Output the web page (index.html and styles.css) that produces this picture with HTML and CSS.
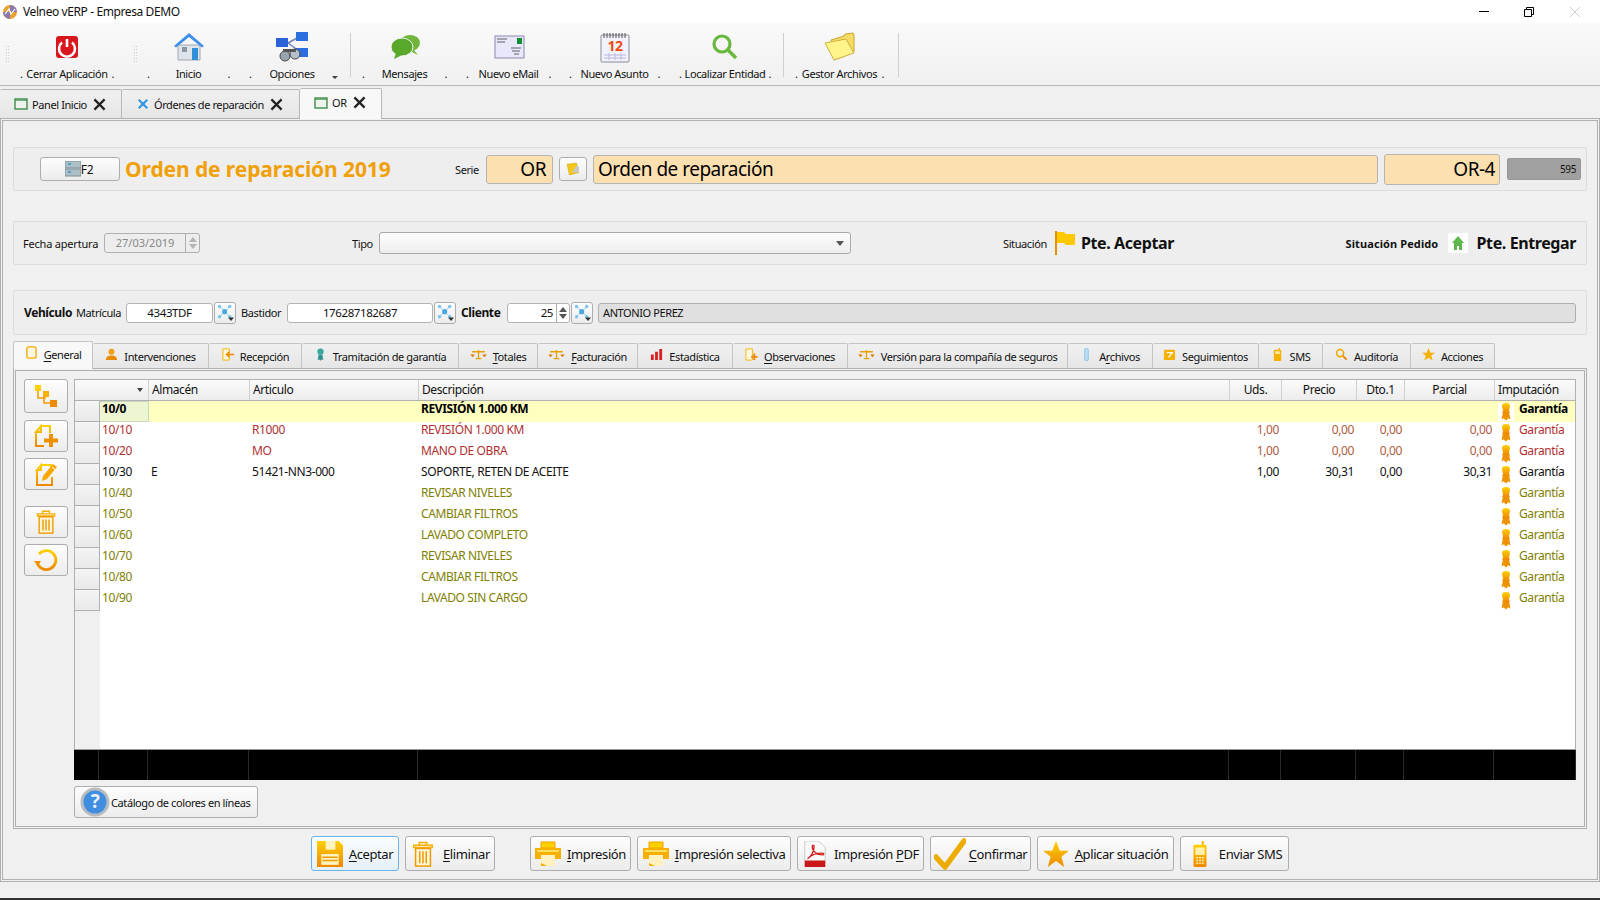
FILE: index.html
```html
<!DOCTYPE html>
<html lang="es">

<head>
    <meta charset="UTF-8">
    <title>Velneo vERP - Empresa DEMO</title>
    <link rel="stylesheet" href="styles.css">
</head>

<body>
    <svg class="sprite" xmlns="http://www.w3.org/2000/svg">
        <defs>
            <linearGradient id="og" x1="0" y1="0" x2="0" y2="1">
                <stop offset="0" stop-color="#ffd000" />
                <stop offset="1" stop-color="#ee8800" />
            </linearGradient>
            <symbol id="i-window" viewBox="0 0 14 12">
                <rect x="1" y="1" width="12" height="10" fill="#eef3ee" stroke="#3d8f4a" stroke-width="1.4" />
                <path d="M1 2.2h12" stroke="#3d8f4a" stroke-width="1" />
            </symbol>
            <symbol id="i-close" viewBox="0 0 14 14">
                <path d="M1.500 1.500L12.500 12.500M12.500 1.500L1.500 12.500" stroke="#222" stroke-width="2.400" />
            </symbol>
            <symbol id="i-nodes" viewBox="0 0 20 20">
                <path d="M9 9L3 3M9 9L15 3M9 9L3 15M9 9L15 15" stroke="#a8d8f0" stroke-width="1.200" />
                <circle cx="9" cy="9" r="3" fill="#4aa8e0" />
                <circle cx="3" cy="3" r="2" fill="#7cc4ec" />
                <circle cx="15" cy="3" r="2" fill="#7cc4ec" />
                <circle cx="3" cy="15" r="2" fill="#7cc4ec" />
                <circle cx="15" cy="15" r="2" fill="#7cc4ec" />
                <path d="M13 16h7l-3.500 4z" fill="#333" />
            </symbol>
            <symbol id="i-medal" viewBox="0 0 12 18">
                <path d="M3 9L1.500 16.500l2.200-1.200L6 17.500l2.300-2.200 2.200 1.200L9 9z" fill="#ee9200" />
                <path d="M2 3a4 3 0 0 1 8 0c0 2-1 3-1 5l1 2H2l1-2c0-2-1-3-1-5z" fill="url(#og)" />
            </symbol>
            <symbol id="i-scale" viewBox="0 0 18 12">
                <path d="M2 3h14M9 1v9M6 10.500h6" stroke="#e8a000" stroke-width="1.400" />
                <path d="M0 6h5l-2.500 3zM13 6h5l-2.500 3z" fill="#e07800" />
            </symbol>
            <symbol id="i-trash" viewBox="0 0 22 28">
                <path d="M7 4V1.500h8V4M1 4.500h20v2.500H1z" fill="none" stroke="#f5b000" stroke-width="1.6" />
                <rect x="3" y="8" width="16" height="19" fill="#fff6d8" stroke="#ee9a00" stroke-width="1.6" />
                <path d="M7.500 11v13M11 11v13M14.500 11v13" stroke="#ee9a00" stroke-width="1.6" />
            </symbol>
            <symbol id="i-printer" viewBox="0 0 26 26">
                <path d="M6 1h14v6H6z" fill="#ffd000" stroke="#f0a000" />
                <path d="M0 7h26v11h-6v7H6v-7H0z" fill="#f7b000" />
                <path d="M6 14h14v11h-8l-6-3z" fill="#fff2c0" />
                <path d="M2 9h22v2H2z" fill="#ffe060" />
            </symbol>
        </defs>
    </svg>

    <div class="titlebar">
        <svg class="app-logo" viewBox="0 0 14 14">
            <circle cx="7" cy="7" r="7" fill="#e8a030" />
            <path d="M7 0a7 7 0 0 1 7 7L7 7z" fill="#8a78b0" />
            <path d="M0 7a7 7 0 0 0 7 7L7 7z" fill="#8a78b0" />
            <path d="M2 9L6 4l2 5 4-5" fill="none" stroke="#fff" stroke-width="1.2" />
        </svg>
        <span class="app-title">Velneo vERP - Empresa DEMO</span>
        <svg class="win-btn win-min" viewBox="0 0 10 10"><path d="M0 4.500h10" stroke="#000" /></svg>
        <svg class="win-btn win-restore" viewBox="0 0 10 10">
            <path d="M.5 2.500h7v7h-7zM2.500 2.500v-2h7v7h-2" fill="none" stroke="#000" />
        </svg>
        <svg class="win-btn win-close" viewBox="0 0 10 10"><path d="M0 0l10 10M10 0L0 10" stroke="#ccc" /></svg>
    </div>

    <div class="toolbar">
        <div class="grip grip-1"></div>
        <div class="tool tool-cerrar">
            <svg class="tool-icon" width="32" height="32" viewBox="0 0 32 32">
                <rect x="5" y="5" width="22" height="22" rx="3" fill="#d9161e" />
                <path d="M11 11.500a8 8 0 1 0 10 0" fill="none" stroke="#fff" stroke-width="2.600" />
                <path d="M16 8v8" stroke="#fff" stroke-width="2.600" />
            </svg>
            <div class="tool-label"><span>.</span><span>Cerrar Aplicación</span><span>.</span></div>
        </div>
        <div class="grip grip-2"></div>
        <div class="tool tool-inicio">
            <svg class="tool-icon" width="32" height="32" viewBox="0 0 32 32">
                <path d="M5 14h22v15H5z" fill="#dfe4ea" stroke="#a0a8b0" />
                <path d="M1 15L16 2l15 13-2 1.500L16 6 3 16.500z" fill="#3f8fe8" />
                <rect x="9" y="16" width="5" height="5" fill="#8c97a3" />
                <rect x="19" y="17" width="6" height="12" fill="#2f8fd8" />
            </svg>
            <div class="tool-label"><span>.</span><span>Inicio</span><span>.</span></div>
        </div>
        <div class="tool tool-opciones">
            <svg class="tool-icon" width="34" height="32" viewBox="0 0 34 32">
                <path d="M13 12L24 6M13 12l11 8" stroke="#7080c0" stroke-width="1.500" fill="none" />
                <rect x="1" y="7" width="12" height="9" fill="#2a62d8" />
                <rect x="21" y="1" width="12" height="9" fill="#2a6ee0" />
                <rect x="21" y="17" width="12" height="9" fill="#2a6ee0" />
                <circle cx="10" cy="25" r="5" fill="#9aa4ae" stroke="#444" />
                <circle cx="20" cy="23" r="5" fill="#b4c0cc" stroke="#444" />
                <path d="M8 18h13v3H8z" fill="#555" />
            </svg>
            <div class="tool-label"><span>.</span><span>Opciones</span><span>.</span></div>
        </div>
        <div class="more-arrow"></div>
        <div class="tool-sep sep-1"></div>
        <div class="tool tool-mensajes">
            <svg class="tool-icon" width="32" height="32" viewBox="0 0 32 32">
                <ellipse cx="21" cy="12" rx="10" ry="8" fill="#6fb63a" />
                <path d="M24 18l5 6-8-4z" fill="#6fb63a" />
                <ellipse cx="13" cy="16" rx="11" ry="9" fill="#58a82c" stroke="#f4f4f4" />
                <path d="M7 22l-2 6 8-4z" fill="#58a82c" />
            </svg>
            <div class="tool-label"><span>.</span><span>Mensajes</span><span>.</span></div>
        </div>
        <div class="tool tool-email">
            <svg class="tool-icon" width="32" height="32" viewBox="0 0 32 32">
                <rect x="2" y="5" width="29" height="22" fill="#e8e8fa" stroke="#8888b0" />
                <rect x="24" y="7" width="5" height="6" fill="#0f9030" />
                <path d="M4 8h10M4 11h8M18 17h10M19 20h8M21 23h5" stroke="#8c8c98" stroke-width="1.500" />
            </svg>
            <div class="tool-label"><span>.</span><span>Nuevo eMail</span><span>.</span></div>
        </div>
        <div class="tool tool-asunto">
            <svg class="tool-icon" width="32" height="32" viewBox="0 0 32 32">
                <rect x="2" y="4" width="28" height="27" rx="1" fill="#f2f2fa" stroke="#8a8a98" />
                <path d="M5 2v5M8 2v5M11 2v5M14 2v5M17 2v5M20 2v5M23 2v5M26 2v5" stroke="#555" />
                <text class="cal-num" x="16" y="20">12</text>
                <path d="M5 24h22M5 27h22M10 22v7M16 22v7M22 22v7" stroke="#b8b8e0" />
            </svg>
            <div class="tool-label"><span>.</span><span>Nuevo Asunto</span><span>.</span></div>
        </div>
        <div class="tool tool-localizar">
            <svg class="tool-icon" width="32" height="32" viewBox="0 0 32 32">
                <circle cx="13" cy="13" r="8" fill="none" stroke="#68b83e" stroke-width="3.200" />
                <path d="M19 19l8 8" stroke="#68b83e" stroke-width="3.600" />
            </svg>
            <div class="tool-label"><span>.</span><span>Localizar Entidad</span><span>.</span></div>
        </div>
        <div class="tool-sep sep-2"></div>
        <div class="tool tool-gestor">
            <svg class="tool-icon" width="32" height="32" viewBox="0 0 32 32">
                <path d="M7 9l13-4 1-2 8-1 1 2v17L10 29z" fill="#f6dc60" stroke="#c8a838" />
                <path d="M1 12l21-4 8 14-20 7z" fill="#fff48a" stroke="#d0b040" />
            </svg>
            <div class="tool-label"><span>.</span><span>Gestor Archivos</span><span>.</span></div>
        </div>
        <div class="tool-sep sep-3"></div>
    </div>

    <div class="doc-tabs">
        <div class="doc-tab">
            <svg class="doc-tab-icon"><use href="#i-window" /></svg>
            <span>Panel Inicio</span>
            <svg class="doc-tab-close"><use href="#i-close" /></svg>
        </div>
        <div class="doc-tab">
            <svg class="doc-tab-icon" viewBox="0 0 14 14">
                <path d="M2 2l10 10M12 2L2 12" stroke="#2f9ae0" stroke-width="2.400" />
                <circle cx="7" cy="7" r="2.400" fill="#2f9ae0" />
            </svg>
            <span>Órdenes de reparación</span>
            <svg class="doc-tab-close"><use href="#i-close" /></svg>
        </div>
        <div class="doc-tab active">
            <svg class="doc-tab-icon"><use href="#i-window" /></svg>
            <span>OR</span>
            <svg class="doc-tab-close"><use href="#i-close" /></svg>
        </div>
    </div>

    <div class="main-pane">
        <div class="group group-head">
            <button class="btn btn-f2">
                <svg class="f2-icon" viewBox="0 0 16 16">
                    <rect x="0" y="0" width="16" height="7" fill="#aebfc6" stroke="#7d8f96" />
                    <rect x="0" y="8" width="16" height="7" fill="#aebfc6" stroke="#7d8f96" />
                    <path d="M3 3h3M3 11h3" stroke="#4fa0d0" stroke-width="2" />
                </svg><span>F2</span>
            </button>
            <div class="page-title">Orden de reparación 2019</div>
            <span class="lbl lbl-serie">Serie</span>
            <div class="field-big fb-serie">OR</div>
            <button class="btn btn-folder">
                <svg class="folder-mini" viewBox="0 0 12 12">
                    <path d="M1 2l8-1 2 8-8 2z" fill="#f4c814" stroke="#d8a800" stroke-width=".6" />
                    <path d="M9 3l2 1v5H5z" fill="#c8c8c8" />
                </svg>
            </button>
            <div class="field-big fb-desc">Orden de reparación</div>
            <div class="field-big fb-num">OR-4</div>
            <div class="field-gray">595</div>
        </div>

        <div class="group group-dates">
            <span class="lbl lbl-fecha">Fecha apertura</span>
            <div class="date-field">
                <span class="date-val">27/03/2019</span>
                <div class="spin spin-off"><i class="up"></i><i class="down"></i></div>
            </div>
            <span class="lbl lbl-tipo">Tipo</span>
            <div class="combo"><i class="combo-arrow"></i></div>
            <span class="lbl lbl-sit">Situación</span>
            <svg class="flag" viewBox="0 0 20 24">
                <path d="M1 0v24" stroke="#e89000" stroke-width="2" />
                <path d="M2 1h7l2 2h9v11h-9l-2-2H2z" fill="#ffc800" />
            </svg>
            <span class="state">Pte. Aceptar</span>
            <span class="lbl lbl-sitped">Situación Pedido</span>
            <span class="home-box">
                <svg class="home-icon" viewBox="0 0 14 16">
                    <path d="M7 1l6 7h-2v7H8v-4H6v4H3V8H1z" fill="#5cb84c" />
                </svg>
            </span>
            <span class="state state-ped">Pte. Entregar</span>
        </div>

        <div class="group group-vehicle">
            <span class="lbl-bold lbl-veh">Vehículo</span>
            <span class="lbl lbl-mat">Matrícula</span>
            <div class="input in-mat">4343TDF</div>
            <button class="btn btn-pick"><svg class="pick-icon"><use href="#i-nodes" /></svg></button>
            <span class="lbl lbl-bas">Bastidor</span>
            <div class="input in-bas">176287182687</div>
            <button class="btn btn-pick"><svg class="pick-icon"><use href="#i-nodes" /></svg></button>
            <span class="lbl-bold lbl-cli">Cliente</span>
            <div class="input in-cli">
                <span class="cli-val">25</span>
                <div class="spin"><i class="up"></i><i class="down"></i></div>
            </div>
            <button class="btn btn-pick"><svg class="pick-icon"><use href="#i-nodes" /></svg></button>
            <div class="input-name">ANTONIO PEREZ</div>
        </div>

        <div class="sub-tabs">
            <div class="sub-tab active">
                <svg class="st-icon" viewBox="0 0 14 14"><rect x="2" y="1" width="10" height="12" rx="2" fill="#fff8e0" stroke="#f5a800" stroke-width="1.400" /></svg>
                <span><u>G</u>eneral</span>
            </div>
            <div class="sub-tab">
                <svg class="st-icon" viewBox="0 0 14 14"><circle cx="7" cy="4" r="3.200" fill="#f0a010" /><path d="M1 13c0-4 3-5 6-5s6 1 6 5z" fill="#e88a00" /></svg>
                <span>Intervenciones</span>
            </div>
            <div class="sub-tab">
                <svg class="st-icon" viewBox="0 0 14 14"><path d="M2 1h7v12H2z" fill="#fff8e0" stroke="#f5b000" /><path d="M14 7H7M9 4L6 7l3 3" stroke="#ee8800" stroke-width="1.600" fill="none" /></svg>
                <span>Recepción</span>
            </div>
            <div class="sub-tab">
                <svg class="st-icon" viewBox="0 0 12 18"><path d="M3.500 9L2 17l2-1.400L6 17.500l2-1.900L10 17 8.500 9z" fill="#2a9090" /><circle cx="6" cy="5" r="4.400" fill="#3aa8a0" /></svg>
                <span>Tramitación de garantía</span>
            </div>
            <div class="sub-tab">
                <svg class="st-icon st-wide"><use href="#i-scale" /></svg>
                <span><u>T</u>otales</span>
            </div>
            <div class="sub-tab">
                <svg class="st-icon st-wide"><use href="#i-scale" /></svg>
                <span><u>F</u>acturación</span>
            </div>
            <div class="sub-tab">
                <svg class="st-icon" viewBox="0 0 14 14"><path d="M1 7h3v6H1zM5.500 4h3v9h-3zM10 1h3v12h-3z" fill="#d82020" /></svg>
                <span>Estadística</span>
            </div>
            <div class="sub-tab">
                <svg class="st-icon" viewBox="0 0 14 14"><path d="M1 1h7v12H1z" fill="#fff8e0" stroke="#f5b000" /><path d="M10 6v7M6.500 9.500h7" stroke="#ee8800" stroke-width="2" /></svg>
                <span><u>O</u>bservaciones</span>
            </div>
            <div class="sub-tab">
                <svg class="st-icon st-wide"><use href="#i-scale" /></svg>
                <span>Versión para la compañía de seguros</span>
            </div>
            <div class="sub-tab">
                <svg class="st-icon" viewBox="0 0 14 14"><rect x="5" y="0" width="4" height="14" rx="2" fill="#b8ddf4" stroke="#6ab0e0" stroke-width=".6" /></svg>
                <span>A<u>r</u>chivos</span>
            </div>
            <div class="sub-tab">
                <svg class="st-icon" viewBox="0 0 14 14"><rect x="1" y="2" width="12" height="11" rx="1" fill="#f5b000" /><path d="M4 5h6L6 10" stroke="#fff" stroke-width="1.400" fill="none" /></svg>
                <span>Seguimientos</span>
            </div>
            <div class="sub-tab">
                <svg class="st-icon" viewBox="0 0 14 14"><rect x="3" y="2" width="8" height="12" rx="1" fill="#f5b000" /><rect x="4.500" y="3.500" width="5" height="3" fill="#ffe9a0" /><path d="M9 0v3" stroke="#f5b000" stroke-width="1.400" /></svg>
                <span>SMS</span>
            </div>
            <div class="sub-tab">
                <svg class="st-icon" viewBox="0 0 14 14"><circle cx="5.500" cy="5.500" r="3.800" fill="none" stroke="#f0a800" stroke-width="1.600" /><path d="M8.500 8.500l4 4" stroke="#ee8800" stroke-width="2" /></svg>
                <span>Auditoría</span>
            </div>
            <div class="sub-tab">
                <svg class="st-icon" viewBox="0 0 14 14"><path d="M7 0l2 5h5l-4 3 1.500 5.500L7 10.500 2.500 13.500 4 8 0 5h5z" fill="#f5b000" /></svg>
                <span>Acciones</span>
            </div>
        </div>

        <div class="sub-pane">
            <div class="grid-area">
                <div class="side-bar">
                    <button class="btn side-btn side-first">
                        <svg class="side-icon" viewBox="0 0 24 24">
                            <path d="M4 6v8h8M10 9v10h8" stroke="#f0a000" stroke-width="1.600" fill="none" />
                            <rect x="1" y="1" width="6" height="6" fill="#ffd000" />
                            <rect x="9" y="7" width="6" height="6" fill="#f5b000" />
                            <rect x="16" y="16" width="7" height="7" fill="#ee8a00" />
                        </svg>
                    </button>
                    <button class="btn side-btn">
                        <svg class="side-icon" viewBox="0 0 24 24">
                            <path d="M7 2h9v7M2 8v14h8M7 2L2 8h5z" fill="none" stroke="url(#og)" stroke-width="2" />
                            <path d="M17 10v13M10 16.500h14" stroke="#ee9000" stroke-width="4" />
                        </svg>
                    </button>
                    <button class="btn side-btn">
                        <svg class="side-icon" viewBox="0 0 24 24">
                            <path d="M7 3h10v3M3 8v15h15v-8M7 3L3 8h4z" fill="none" stroke="url(#og)" stroke-width="2" />
                            <path d="M19 2l4 3-10 12-5 2 1-5z" fill="#f5a800" />
                            <path d="M18 5l3 2.500" stroke="#fff" />
                        </svg>
                    </button>
                    <button class="btn side-btn side-sep"><svg class="side-icon"><use href="#i-trash" /></svg></button>
                    <button class="btn side-btn">
                        <svg class="side-icon" viewBox="0 0 24 24">
                            <path d="M5 6a9.500 9.500 0 1 1-2 8" fill="none" stroke="url(#og)" stroke-width="2.800" />
                            <path d="M0 13l7 0-3 5z" fill="#ee9000" />
                        </svg>
                    </button>
                </div>

                <div class="grid-col">
                    <div class="grid">
                        <div class="grid-row grid-head">
                            <div class="h-corner"><i class="sort-arrow"></i></div>
                            <div class="h-cell">Almacén</div>
                            <div class="h-cell">Articulo</div>
                            <div class="h-cell">Descripción</div>
                            <div class="h-cell h-c">Uds.</div>
                            <div class="h-cell h-c">Precio</div>
                            <div class="h-cell h-c">Dto.1</div>
                            <div class="h-cell h-c">Parcial</div>
                            <div class="h-cell h-last">Imputación</div>
                        </div>

                        <div class="grid-row row-sel">
                            <div class="r-head"></div><div class="c c-cur">10/0</div><div class="c"></div><div class="c"></div><div class="c">REVISIÓN 1.000 KM</div><div class="c"></div><div class="c"></div><div class="c"></div><div class="c"></div>
                            <div class="c-imp"><span class="medal-box"><svg class="medal"><use href="#i-medal" /></svg></span>Garantía</div>
                        </div>
                        <div class="grid-row row-red">
                            <div class="r-head"></div><div class="c">10/10</div><div class="c"></div><div class="c">R1000</div><div class="c">REVISIÓN 1.000 KM</div><div class="c n">1,00</div><div class="c n">0,00</div><div class="c n">0,00</div><div class="c n n3">0,00</div>
                            <div class="c-imp"><span class="medal-box"><svg class="medal"><use href="#i-medal" /></svg></span>Garantía</div>
                        </div>
                        <div class="grid-row row-red">
                            <div class="r-head"></div><div class="c">10/20</div><div class="c"></div><div class="c">MO</div><div class="c">MANO DE OBRA</div><div class="c n">1,00</div><div class="c n">0,00</div><div class="c n">0,00</div><div class="c n n3">0,00</div>
                            <div class="c-imp"><span class="medal-box"><svg class="medal"><use href="#i-medal" /></svg></span>Garantía</div>
                        </div>
                        <div class="grid-row">
                            <div class="r-head"></div><div class="c">10/30</div><div class="c">E</div><div class="c">51421-NN3-000</div><div class="c">SOPORTE, RETEN DE ACEITE</div><div class="c n">1,00</div><div class="c n">30,31</div><div class="c n">0,00</div><div class="c n n3">30,31</div>
                            <div class="c-imp"><span class="medal-box"><svg class="medal"><use href="#i-medal" /></svg></span>Garantía</div>
                        </div>
                        <div class="grid-row row-olive">
                            <div class="r-head"></div><div class="c">10/40</div><div class="c"></div><div class="c"></div><div class="c">REVISAR NIVELES</div><div class="c"></div><div class="c"></div><div class="c"></div><div class="c"></div>
                            <div class="c-imp"><span class="medal-box"><svg class="medal"><use href="#i-medal" /></svg></span>Garantía</div>
                        </div>
                        <div class="grid-row row-olive">
                            <div class="r-head"></div><div class="c">10/50</div><div class="c"></div><div class="c"></div><div class="c">CAMBIAR FILTROS</div><div class="c"></div><div class="c"></div><div class="c"></div><div class="c"></div>
                            <div class="c-imp"><span class="medal-box"><svg class="medal"><use href="#i-medal" /></svg></span>Garantía</div>
                        </div>
                        <div class="grid-row row-olive">
                            <div class="r-head"></div><div class="c">10/60</div><div class="c"></div><div class="c"></div><div class="c">LAVADO COMPLETO</div><div class="c"></div><div class="c"></div><div class="c"></div><div class="c"></div>
                            <div class="c-imp"><span class="medal-box"><svg class="medal"><use href="#i-medal" /></svg></span>Garantía</div>
                        </div>
                        <div class="grid-row row-olive">
                            <div class="r-head"></div><div class="c">10/70</div><div class="c"></div><div class="c"></div><div class="c">REVISAR NIVELES</div><div class="c"></div><div class="c"></div><div class="c"></div><div class="c"></div>
                            <div class="c-imp"><span class="medal-box"><svg class="medal"><use href="#i-medal" /></svg></span>Garantía</div>
                        </div>
                        <div class="grid-row row-olive">
                            <div class="r-head"></div><div class="c">10/80</div><div class="c"></div><div class="c"></div><div class="c">CAMBIAR FILTROS</div><div class="c"></div><div class="c"></div><div class="c"></div><div class="c"></div>
                            <div class="c-imp"><span class="medal-box"><svg class="medal"><use href="#i-medal" /></svg></span>Garantía</div>
                        </div>
                        <div class="grid-row row-olive">
                            <div class="r-head"></div><div class="c">10/90</div><div class="c"></div><div class="c"></div><div class="c">LAVADO SIN CARGO</div><div class="c"></div><div class="c"></div><div class="c"></div><div class="c"></div>
                            <div class="c-imp"><span class="medal-box"><svg class="medal"><use href="#i-medal" /></svg></span>Garantía</div>
                        </div>

                        <div class="grid-fill"><div class="r-head"></div></div>

                        <div class="grid-row grid-foot">
                            <div></div><div></div><div></div><div></div><div></div><div></div><div></div><div></div><div></div><div></div>
                        </div>
                    </div>

                    <button class="btn btn-help">
                        <svg class="help-icon" viewBox="0 0 30 30">
                            <circle cx="15" cy="15" r="14.500" fill="#b8bcc0" />
                            <circle cx="15" cy="15" r="11.500" fill="#3f8ee0" />
                            <text class="help-q" x="15" y="21">?</text>
                        </svg>
                        <span>Catálogo de colores en líneas</span>
                    </button>
                </div>
            </div>
        </div>

        <div class="actions">
            <div class="action-set set-a">
                <button class="btn act act-focus">
                    <svg class="act-icon" viewBox="0 0 24 24">
                        <path d="M0 0h20l4 4v20H0z" fill="url(#og)" />
                        <path d="M8 0h9v8H8z" fill="#fff3c0" />
                        <path d="M4 12h16v10H4z" fill="#fff3c0" />
                        <path d="M5 15h14M5 18h14" stroke="#ee9a00" stroke-width="1.400" />
                    </svg>
                    <span><u>A</u>ceptar</span>
                </button>
                <button class="btn act act-trash">
                    <svg class="act-icon"><use href="#i-trash" /></svg>
                    <span><u>E</u>liminar</span>
                </button>
            </div>
            <div class="action-set set-b">
                <button class="btn act">
                    <svg class="act-icon"><use href="#i-printer" /></svg>
                    <span><u>I</u>mpresión</span>
                </button>
                <button class="btn act">
                    <svg class="act-icon"><use href="#i-printer" /></svg>
                    <span><u>I</u>mpresión selectiva</span>
                </button>
                <button class="btn act">
                    <svg class="act-icon act-pdf" viewBox="0 0 24 28">
                        <path d="M1 0h15l7 7v21H1z" fill="#fafafa" stroke="#c8c8c8" />
                        <path d="M1 21h22v7H1z" fill="#c81818" />
                        <path d="M4 19c4-2 7-8 7-13 0-2-2-2-2 0 0 5 5 9 11 9 2 0 2-2 0-2-6 0-12 2-16 6z" fill="none" stroke="#d41c1c" stroke-width="1.400" />
                    </svg>
                    <span>Impresión <u>P</u>DF</span>
                </button>
                <button class="btn act">
                    <svg class="act-icon act-check" viewBox="0 0 32 32">
                        <path d="M2 19l9 10L30 3" fill="none" stroke="#eeac00" stroke-width="5.500" stroke-linecap="round" stroke-linejoin="round" />
                    </svg>
                    <span><u>C</u>onfirmar</span>
                </button>
                <button class="btn act">
                    <svg class="act-icon" viewBox="0 0 24 24">
                        <path d="M12 0l3.500 9H24l-7 5.500L19.500 24 12 18.500 4.500 24 7 14.500 0 9h8.500z" fill="url(#og)" />
                    </svg>
                    <span><u>A</u>plicar situación</span>
                </button>
                <button class="btn act">
                    <svg class="act-icon" viewBox="0 0 16 28">
                        <path d="M10 0h2v5h-2z" fill="#f5b000" />
                        <rect x="1" y="4" width="14" height="24" rx="1.500" fill="url(#og)" />
                        <rect x="3" y="7" width="10" height="8" fill="#fff0b0" />
                        <path d="M4 18h2M7 18h2M10 18h2M4 21h2M7 21h2M10 21h2M4 24h2M7 24h2M10 24h2" stroke="#fff0b0" stroke-width="1.500" />
                    </svg>
                    <span>Enviar SMS</span>
                </button>
            </div>
        </div>
    </div>

    <div class="bottom-line"></div>
</body>

</html>
```

FILE: styles.css
```css
* {
    box-sizing: border-box;
}

html,
body {
    margin: 0;
    padding: 0;
}

body {
    width: 1600px;
    height: 900px;
    overflow: hidden;
    background-color: #f0f0f0;
    font-family: "Noto Sans", "Liberation Sans", sans-serif;
    font-size: 12px;
    letter-spacing: -.4px;
    color: #111;
    white-space: nowrap;
}

.sprite {
    display: block;
    width: 0;
    height: 0;
}

u {
    text-underline-offset: 2px;
}

button {
    font: inherit;
    letter-spacing: inherit;
    color: inherit;
    padding: 0;
}

/* window title */
.titlebar {
    height: 23px;
    background-color: #fff;
    display: flex;
    align-items: center;
    padding-left: 3px;
}

.app-logo {
    width: 14px;
    height: 14px;
}

.app-title {
    margin-left: 6px;
}

.win-btn {
    width: 10px;
    height: 10px;
}

.win-min {
    margin-left: auto;
}

.win-restore {
    margin-left: 35px;
}

.win-close {
    margin-left: 36px;
    margin-right: 20px;
}

/* toolbar */
.toolbar {
    height: 63px;
    display: flex;
    background: linear-gradient(#fafafa, #f0f0f0);
    border-bottom: 1px solid #b8b8b8;
}

.tool {
    display: flex;
    flex-direction: column;
    align-items: center;
    padding-top: 8px;
    flex: none;
}

.tool-icon {
    display: block;
    height: 32px;
    flex: none;
}

.tool-label {
    align-self: stretch;
    display: flex;
    justify-content: space-between;
    margin-top: 3px;
    font-size: 11px;
    line-height: 16px;
}

.tool-cerrar { width: 94px; margin-left: 10px; }
.tool-inicio { width: 83px; margin-left: 15px; }
.tool-opciones { width: 86px; margin-left: 19px; }
.tool-mensajes { width: 85px; margin-left: 11px; }
.tool-email { width: 85px; margin-left: 19px; }
.tool-asunto { width: 91px; margin-left: 18px; }
.tool-localizar { width: 92px; margin-left: 19px; }
.tool-gestor { width: 89px; margin-left: 11px; }

.grip {
    width: 5px;
    height: 18px;
    margin-top: 22px;
    flex: none;
    background-image: radial-gradient(#bbb 40%, transparent 45%);
    background-size: 2.500px 3px;
}

.grip-1 { margin-left: 5px; }
.grip-2 { margin-left: 19px; margin-right: -6px; }

.more-arrow {
    width: 0;
    height: 0;
    margin: 53px 0 0 -3px;
    border: 3px solid transparent;
    border-top: 3px solid #444;
    flex: none;
}

.tool-sep {
    width: 1px;
    height: 44px;
    margin-top: 10px;
    background-color: #cfcfcf;
    flex: none;
}

.sep-1 { margin-left: 12px; }
.sep-2 { margin-left: 12px; }
.sep-3 { margin-left: 14px; }

/* document tabs */
.doc-tabs {
    height: 32px;
    display: grid;
    grid-template-columns: 122px 178px 82px;
    align-items: end;
}

.doc-tab {
    height: 29px;
    display: flex;
    align-items: center;
    padding: 0 0 0 14px;
    font-size: 11px;
    background: linear-gradient(#f0f0f0, #e6e6e6);
    border: 1px solid #b8b8b8;
    border-left: 0;
    border-bottom: 0;
    border-radius: 2px 2px 0 0;
}

.doc-tab.active {
    height: 31px;
    margin-bottom: -1px;
    background: #f8f8f8;
    padding-bottom: 3px;
    position: relative;
}

.doc-tab-icon {
    width: 14px;
    height: 12px;
    margin-right: 4px;
    flex: none;
}

.doc-tab-close {
    width: 13px;
    height: 13px;
    margin-left: 6px;
    flex: none;
}

/* main form */
.main-pane {
    height: 764px;
    border: 3px double #b0b0b0;
    padding: 26px 10px 0;
}

.group {
    height: 44px;
    display: flex;
    align-items: center;
    background-color: #eee;
    border: 1px solid #dcdcdc;
    border-radius: 2px;
}

.lbl {
    font-size: 11px;
    letter-spacing: -.4px;
    flex: none;
}

.lbl-bold {
    font-size: 12px;
    font-weight: 700;
    flex: none;
}

.btn {
    border: 1px solid #adadad;
    border-radius: 3px;
    background: linear-gradient(#fdfdfd, #ececec);
    cursor: default;
}

/* header group */
.group-head {
    padding: 0 5px 0 26px;
}

.btn-f2 {
    width: 80px;
    height: 24px;
    flex: none;
    display: flex;
    align-items: center;
    justify-content: center;
    padding-right: 2px;
}

.f2-icon {
    width: 16px;
    height: 16px;
}

.page-title {
    width: 330px;
    margin-left: 5px;
    font-size: 21px;
    letter-spacing: -.1px;
    font-weight: 700;
    color: #f0a008;
    flex: none;
}

.lbl-serie {
    width: 31px;
}

.field-big {
    height: 29px;
    background-color: #fde0b0;
    border: 1px solid #b4b4b4;
    border-radius: 3px;
    font-size: 19px;
    letter-spacing: -.5px;
    line-height: 26px;
    color: #000;
    padding: 0 6px;
    flex: none;
}

.fb-serie {
    width: 67px;
    text-align: right;
}

.btn-folder {
    width: 28px;
    height: 24px;
    margin: 0 6px;
    flex: none;
    display: flex;
    align-items: center;
    justify-content: center;
}

.folder-mini {
    width: 14px;
    height: 14px;
}

.fb-desc {
    flex: 1;
    padding-left: 4px;
}

.fb-num {
    width: 116px;
    height: 31px;
    margin-left: 6px;
    text-align: right;
    padding-right: 4px;
    line-height: 28px;
}

.field-gray {
    width: 74px;
    height: 22px;
    margin-left: 7px;
    background-color: #a0a0a0;
    border: 1px solid #999;
    border-radius: 2px;
    font-size: 10px;
    line-height: 20px;
    text-align: right;
    padding-right: 4px;
    flex: none;
}

/* date and state group */
.group-dates {
    margin-top: 30px;
    padding: 0 10px 0 9px;
}

.lbl-fecha {
    width: 81px;
    letter-spacing: -.2px;
}

.date-field {
    width: 96px;
    height: 20px;
    display: flex;
    border: 1px solid #b0b0b0;
    border-radius: 3px;
    background-color: #ededed;
    font-size: 11px;
    letter-spacing: 0;
    line-height: 18px;
    color: #888;
    flex: none;
}

.date-val {
    flex: 1;
    text-align: center;
}

.spin {
    width: 14px;
    display: flex;
    flex-direction: column;
    align-items: center;
    justify-content: center;
    gap: 2px;
    border-left: 1px solid #b0b0b0;
    flex: none;
}

.spin i {
    width: 0;
    height: 0;
    border-left: 4px solid transparent;
    border-right: 4px solid transparent;
}

.spin .up {
    border-bottom: 5px solid #555;
}

.spin .down {
    border-top: 5px solid #555;
}

.spin-off .up {
    border-bottom-color: #b4b4b4;
}

.spin-off .down {
    border-top-color: #b4b4b4;
}

.lbl-tipo {
    width: 27px;
    margin-left: 152px;
}

.combo {
    width: 472px;
    height: 22px;
    display: flex;
    align-items: center;
    justify-content: flex-end;
    padding-right: 6px;
    border: 1px solid #aaa;
    border-radius: 3px;
    background: linear-gradient(#fefefe, #ededed);
    flex: none;
}

.combo-arrow {
    width: 0;
    height: 0;
    border-left: 4px solid transparent;
    border-right: 4px solid transparent;
    border-top: 5px solid #555;
}

.lbl-sit {
    width: 52px;
    margin-left: 152px;
}

.flag {
    width: 20px;
    height: 24px;
    flex: none;
}

.state {
    margin-left: 6px;
    font-size: 16px;
    font-weight: 700;
    color: #111;
}

.lbl-sitped {
    width: 102px;
    margin-left: auto;
    font-weight: 700;
    letter-spacing: .1px;
}

.home-box {
    width: 20px;
    height: 20px;
    display: flex;
    align-items: center;
    justify-content: center;
    background-color: #fff;
    flex: none;
}

.home-icon {
    width: 14px;
    height: 16px;
}

.state-ped {
    margin-left: 9px;
}

/* vehicle group */
.group-vehicle {
    height: 45px;
    margin-top: 25px;
    padding: 0 10px;
}

.lbl-veh { width: 52px; }
.lbl-mat { width: 50px; }
.lbl-bas { width: 46px; margin-left: 5px; }
.lbl-cli { width: 46px; margin-left: 5px; }

.input {
    height: 20px;
    background-color: #fff;
    border: 1px solid #b4b4b4;
    border-radius: 3px;
    font-size: 11.500px;
    line-height: 18px;
    text-align: center;
    flex: none;
}

.in-mat { width: 87px; }
.in-bas { width: 146px; }

.in-cli {
    width: 63px;
    display: flex;
}

.cli-val {
    flex: 1;
    text-align: right;
    padding-right: 3px;
}

.in-cli .spin {
    width: 13px;
}

.btn-pick {
    width: 22px;
    height: 22px;
    margin-left: 1px;
    display: flex;
    align-items: center;
    justify-content: center;
    flex: none;
}

.pick-icon {
    width: 17px;
    height: 17px;
}

.input-name {
    width: 978px;
    height: 20px;
    margin-left: 5px;
    padding-left: 4px;
    background-color: #e0e0e0;
    border: 1px solid #aeaeae;
    border-radius: 3px;
    font-size: 11px;
    line-height: 18px;
    flex: none;
}

/* inner tabs */
.sub-tabs {
    height: 27px;
    margin-top: 6px;
    display: grid;
    grid-template-columns: 80px 116px 93px 157px 79px 100px 95px 115px 220px 85px 106px 64px 88px 84px;
    align-items: end;
}

.sub-tab {
    height: 25px;
    display: flex;
    align-items: center;
    justify-content: center;
    gap: 6px;
    font-size: 11px;
    background: linear-gradient(#f0f0f0, #e6e6e6);
    border: 1px solid #c4c4c4;
    border-left: 0;
    border-bottom: 0;
    border-radius: 2px 2px 0 0;
}

.sub-tab.active {
    height: 28px;
    margin-bottom: -1px;
    padding-bottom: 3px;
    background: #f8f8f8;
    border-left: 1px solid #c4c4c4;
    position: relative;
}

.st-icon {
    width: 13px;
    height: 13px;
    margin-top: -4px;
    flex: none;
}

.st-wide {
    width: 17px;
    height: 11px;
}

.sub-pane {
    height: 461px;
    border: 3px double #b0b0b0;
    padding: 8px 9px 8px 8px;
    background-color: #f0f0f0;
}

.grid-area {
    display: flex;
    gap: 6px;
    height: 100%;
}

.side-bar {
    width: 44px;
    display: flex;
    flex-direction: column;
    gap: 6px;
    flex: none;
}

.side-btn {
    height: 32px;
    display: flex;
    align-items: center;
    justify-content: center;
    flex: none;
}

.side-first {
    height: 34px;
    margin-bottom: 1px;
}

.side-sep {
    margin-top: 10px;
}

.side-icon {
    width: 24px;
    height: 24px;
}

.grid-col {
    flex: 1;
    display: flex;
    flex-direction: column;
    gap: 6px;
}

/* lines table */
.grid {
    height: 401px;
    display: flex;
    flex-direction: column;
    background-color: #fff;
    border-top: 1px solid #b0b0b0;
    border-right: 1px solid #b0b0b0;
    border-left: 1px solid #b0b0b0;
}

.grid-row {
    height: 21px;
    display: grid;
    grid-template-columns: 25px 49px 101px 169px 811px 52px 75px 48px 90px 80px;
    flex: none;
}

.grid-head {
    height: 21px;
    grid-template-columns: 74px 101px 169px 811px 52px 75px 48px 90px 80px;
    background: linear-gradient(#fbfbfb, #ececec);
    border-bottom: 1px solid #b0b0b0;
}

.h-corner {
    display: flex;
    justify-content: flex-end;
    align-items: center;
    padding-right: 5px;
    border-right: 1px solid #d0d0d0;
}

.sort-arrow {
    width: 0;
    height: 0;
    border-left: 3.500px solid transparent;
    border-right: 3.500px solid transparent;
    border-top: 4px solid #444;
}

.h-cell {
    padding-left: 3px;
    line-height: 19px;
    border-right: 1px solid #d0d0d0;
}

.h-c {
    text-align: center;
    padding: 0;
}

.h-last {
    border-right: 0;
}

.r-head {
    width: 25px;
    background: linear-gradient(#f4f4f4, #e9e9e9);
    border-right: 1px solid #b0b0b0;
    border-bottom: 1px solid #b0b0b0;
}

.c {
    padding: 0 2px;
    line-height: 16px;
}

.n {
    text-align: right;
    padding-right: 3px;
}

.n3 {
    padding-right: 3px;
}

.row-red .c,
.row-red .c-imp {
    color: #b03030;
}

.row-red .n {
    color: #b05a40;
}

.row-olive .c,
.row-olive .c-imp {
    color: #808000;
}

.row-sel {
    background-color: #ffffbf;
    font-weight: 700;
    color: #000;
}

.c-cur {
    background-color: #edf6d0;
    border: 1px solid #c8d8c0;
    border-left: 0;
    line-height: 14px;
}

.c-imp {
    display: flex;
    line-height: 16px;
    padding-left: 3px;
}

.medal-box {
    width: 16px;
    height: 18px;
    margin: 2px 5px 0 0;
    display: flex;
    justify-content: center;
    flex: none;
}

.row-sel .medal-box {
    background-color: #fff;
}

.medal {
    width: 12px;
    height: 18px;
}

.grid-fill {
    flex: 1;
    display: flex;
}

.grid-fill .r-head {
    border: 0;
    background: #f0f0f0;
}

.grid-foot {
    height: 31px;
    background-color: #000;
    margin: 0 -1px;
    border-top: 1px solid #999;
    grid-template-columns: 25px 49px 101px 169px 811px 52px 75px 48px 90px 82px;
}

.grid-foot div {
    border-right: 1px solid #2a2a2a;
}

.btn-help {
    width: 184px;
    height: 32px;
    display: flex;
    align-items: center;
    font-size: 11px;
    padding: 0 0 0 5px;
    flex: none;
}

.help-icon {
    width: 30px;
    height: 30px;
    margin-right: 1px;
    flex: none;
}

.help-q {
    font-size: 19px;
    font-weight: 700;
    text-anchor: middle;
    fill: #eef;
}

.cal-num {
    font-size: 14px;
    font-weight: 700;
    text-anchor: middle;
    fill: #f04810;
}

/* action buttons */
.actions {
    margin-top: 7px;
    padding-left: 298px;
    display: flex;
    gap: 35px;
}

.action-set {
    display: grid;
    gap: 6px;
    height: 35px;
}

.set-a {
    grid-template-columns: 88px 90px;
}

.set-b {
    grid-template-columns: 101px 154px 127px 101px 137px 109px;
}

.act {
    display: flex;
    align-items: center;
    justify-content: center;
    gap: 6px;
    font-size: 13px;
}

.act-focus {
    border-color: #6ab4ee;
    background: linear-gradient(#fbfdff, #e6f0f8);
}

.act-trash {
    gap: 7px;
}

.act-icon {
    width: 26px;
    height: 26px;
    flex: none;
}

.act-check {
    width: 32px;
    height: 32px;
    margin-right: -3px;
}

.bottom-line {
    height: 2px;
    margin-top: 16px;
    background-color: #333;
}
```
